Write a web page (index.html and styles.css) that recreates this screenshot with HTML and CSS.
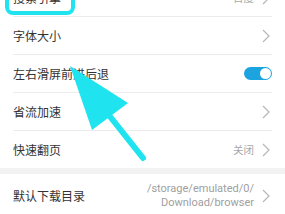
FILE: index.html
```html
<!DOCTYPE html>
<html>
<head>
<meta charset="utf-8">
<link rel="stylesheet" href="styles.css">
</head>
<body>
<div class="page">
  <div class="group">
    <div class="item"><span class="label">搜索引擎</span><span class="right"><span class="value">百度</span><svg class="chev" width="8" height="14" viewBox="0 0 8 14"><polyline points="1,1 7,7 1,13" fill="none" stroke="#b6b6b6" stroke-width="1.2"/></svg></span></div>
    <div class="item"><span class="label">字体大小</span><span class="right"><svg class="chev" width="8" height="14" viewBox="0 0 8 14"><polyline points="1,1 7,7 1,13" fill="none" stroke="#b6b6b6" stroke-width="1.2"/></svg></span></div>
    <div class="item"><span class="label">左右滑屏前进后退</span><span class="right"><span class="toggle"><span class="knob"></span></span></span></div>
    <div class="item"><span class="label">省流加速</span><span class="right"><svg class="chev" width="8" height="14" viewBox="0 0 8 14"><polyline points="1,1 7,7 1,13" fill="none" stroke="#b6b6b6" stroke-width="1.2"/></svg></span></div>
    <div class="item last"><span class="label">快速翻页</span><span class="right"><span class="value">关闭</span><svg class="chev" width="8" height="14" viewBox="0 0 8 14"><polyline points="1,1 7,7 1,13" fill="none" stroke="#b6b6b6" stroke-width="1.2"/></svg></span></div>
  </div>
  <div class="gap"></div>
  <div class="group">
    <div class="item tall"><span class="label">默认下载目录</span><span class="right"><span class="value path">/storage/emulated/0/<br>Download/browser</span><svg class="chev" width="8" height="14" viewBox="0 0 8 14"><polyline points="1,1 7,7 1,13" fill="none" stroke="#b6b6b6" stroke-width="1.2"/></svg></span></div>
  </div>
</div>
<svg class="overlay" width="285" height="214" viewBox="0 0 285 214">
  <rect x="7" y="-20" width="66" height="33" rx="6" ry="6" fill="none" stroke="#1fe4ef" stroke-width="4"/>
  <polygon points="70,66 92,130 128,103" fill="#1fe4ef"/>
  <line x1="108" y1="114" x2="143" y2="158" stroke="#1fe4ef" stroke-width="6" stroke-linecap="round"/>
</svg>
</body>
</html>
```
FILE: styles.css
```css
html, body {
  margin: 0;
  padding: 0;
  background: #ffffff;
  width: 285px;
  height: 214px;
  overflow: hidden;
  font-family: "Noto Sans CJK SC", "Noto Sans", sans-serif;
}
.page {
  margin-top: -21px;
}
.group {
  background: #ffffff;
}
.item {
  display: flex;
  align-items: center;
  justify-content: space-between;
  height: 37px;
  margin: 0 13px;
  border-bottom: 1px solid #ececec;
}
.item.last {
  border-bottom: none;
}
.item.tall {
  height: 44px;
  border-bottom: none;
}
.label {
  font-size: 12px;
  color: #333333;
  line-height: 1;
}
.right {
  display: flex;
  align-items: center;
  gap: 8px;
}
.value {
  font-size: 10.5px;
  color: #a8a8a8;
}
.path {
  font-family: Roboto, "Noto Sans", sans-serif;
  font-size: 11px;
  line-height: 14px;
  text-align: right;
  color: #a0a0a0;
}
.chev {
  display: block;
  margin-right: 2px;
}
.toggle {
  width: 28px;
  height: 13px;
  border-radius: 7px;
  background: #1ba4df;
  display: flex;
  align-items: center;
  justify-content: flex-end;
  padding: 0 1px;
  box-sizing: border-box;
}
.knob {
  width: 11px;
  height: 11px;
  border-radius: 50%;
  background: #ffffff;
}
.gap {
  height: 6px;
  background: #f2f2f2;
}
.overlay {
  position: absolute;
  left: 0;
  top: 0;
}
```
